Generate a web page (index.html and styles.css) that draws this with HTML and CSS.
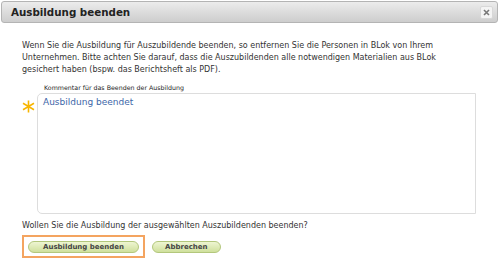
FILE: index.html
```html
<!DOCTYPE html>
<html lang="de">
<head>
  <meta charset="UTF-8" />
  <title>Ausbildung beenden</title>
  <link rel="stylesheet" href="styles.css">
</head>
<body>
  <div class="dialog">
    <div class="titlebar">
      <span class="title">Ausbildung beenden</span>
      <button class="close" title="Schließen">
        <svg width="7" height="7" viewBox="0 0 7 7"><path d="M1 1L6 6M6 1L1 6" stroke="#777" stroke-width="1.6"/></svg>
      </button>
    </div>
    <div class="content">
      <p class="intro">Wenn Sie die Ausbildung für Auszubildende beenden, so entfernen Sie die Personen in BLok von Ihrem Unternehmen. Bitte achten Sie darauf, dass die Auszubildenden alle notwendigen Materialien aus BLok gesichert haben (bspw. das Berichtsheft als PDF).</p>
      <div class="field">
        <label class="label" for="comment">Kommentar für das Beenden der Ausbildung</label>
        <div class="field-row">
          <svg class="req" width="13" height="13" viewBox="0 0 13 13"><path d="M6.5 0.5V12.5M1 3.3L12 9.7M12 3.3L1 9.7" stroke="#f7b500" stroke-width="1.6"/></svg>
          <textarea class="comment" id="comment">Ausbildung beendet</textarea>
        </div>
      </div>
      <p class="question">Wollen Sie die Ausbildung der ausgewählten Auszubildenden beenden?</p>
      <div class="actions">
        <span class="focus"><button class="btn btn-main">Ausbildung beenden</button></span>
        <button class="btn">Abbrechen</button>
      </div>
    </div>
  </div>
</body>
</html>
```

FILE: styles.css
```css
* { margin: 0; padding: 0; box-sizing: border-box; }
body {
  background: #fff;
  font-family: "DejaVu Sans", Verdana, sans-serif;
  color: #333;
}
.dialog {
  width: 500px;
  height: 269px;
  padding: 1px 2px 0 1px;
}
.titlebar {
  height: 22px;
  display: flex;
  align-items: center;
  justify-content: space-between;
  padding: 0 4px 0 9px;
  border: 1px solid #b4b4b4;
  border-radius: 3px;
  background: linear-gradient(#ececec, #cdcdcd);
}
.title {
  font-size: 10.3px;
  font-weight: bold;
  color: #222;
}
.close {
  width: 13px;
  height: 13px;
  display: flex;
  align-items: center;
  justify-content: center;
  border: 1px solid #d8d8d8;
  border-radius: 2px;
  background: #f4f4f4;
}
.content {
  padding: 17px 0 0 21px;
}
.intro {
  font-size: 8px;
  line-height: 12px;
  width: 430px;
}
.field {
  margin-top: 8px;
}
.label {
  display: block;
  font-size: 6.3px;
  color: #222;
  margin-left: 22px;
  line-height: 8px;
}
.field-row {
  display: flex;
  gap: 2px;
}
.req {
  margin-top: 8px;
}
.comment {
  width: 439px;
  height: 121px;
  margin-top: 1px;
  border: 1px solid #ddd;
  border-radius: 5px 0 0 5px;
  padding: 3px 5px;
  font-family: inherit;
  font-size: 9px;
  color: #3d66a8;
  resize: none;
}
.question {
  font-size: 8px;
  line-height: 12px;
  margin-top: 6px;
}
.actions {
  display: flex;
  align-items: center;
  gap: 7px;
  margin-top: 3px;
}
.focus {
  display: flex;
  padding: 4px 4px 3px;
  border: 2px solid #f4a460;
}
.btn {
  height: 12px;
  padding: 0 12px;
  border: 1px solid #b3c77c;
  border-radius: 7px;
  background: linear-gradient(#eef5d2, #cfe09c);
  font-family: inherit;
  font-size: 7px;
  font-weight: bold;
  color: #444;
  line-height: 10px;
}
.btn-main { padding: 0 14px; }
```
